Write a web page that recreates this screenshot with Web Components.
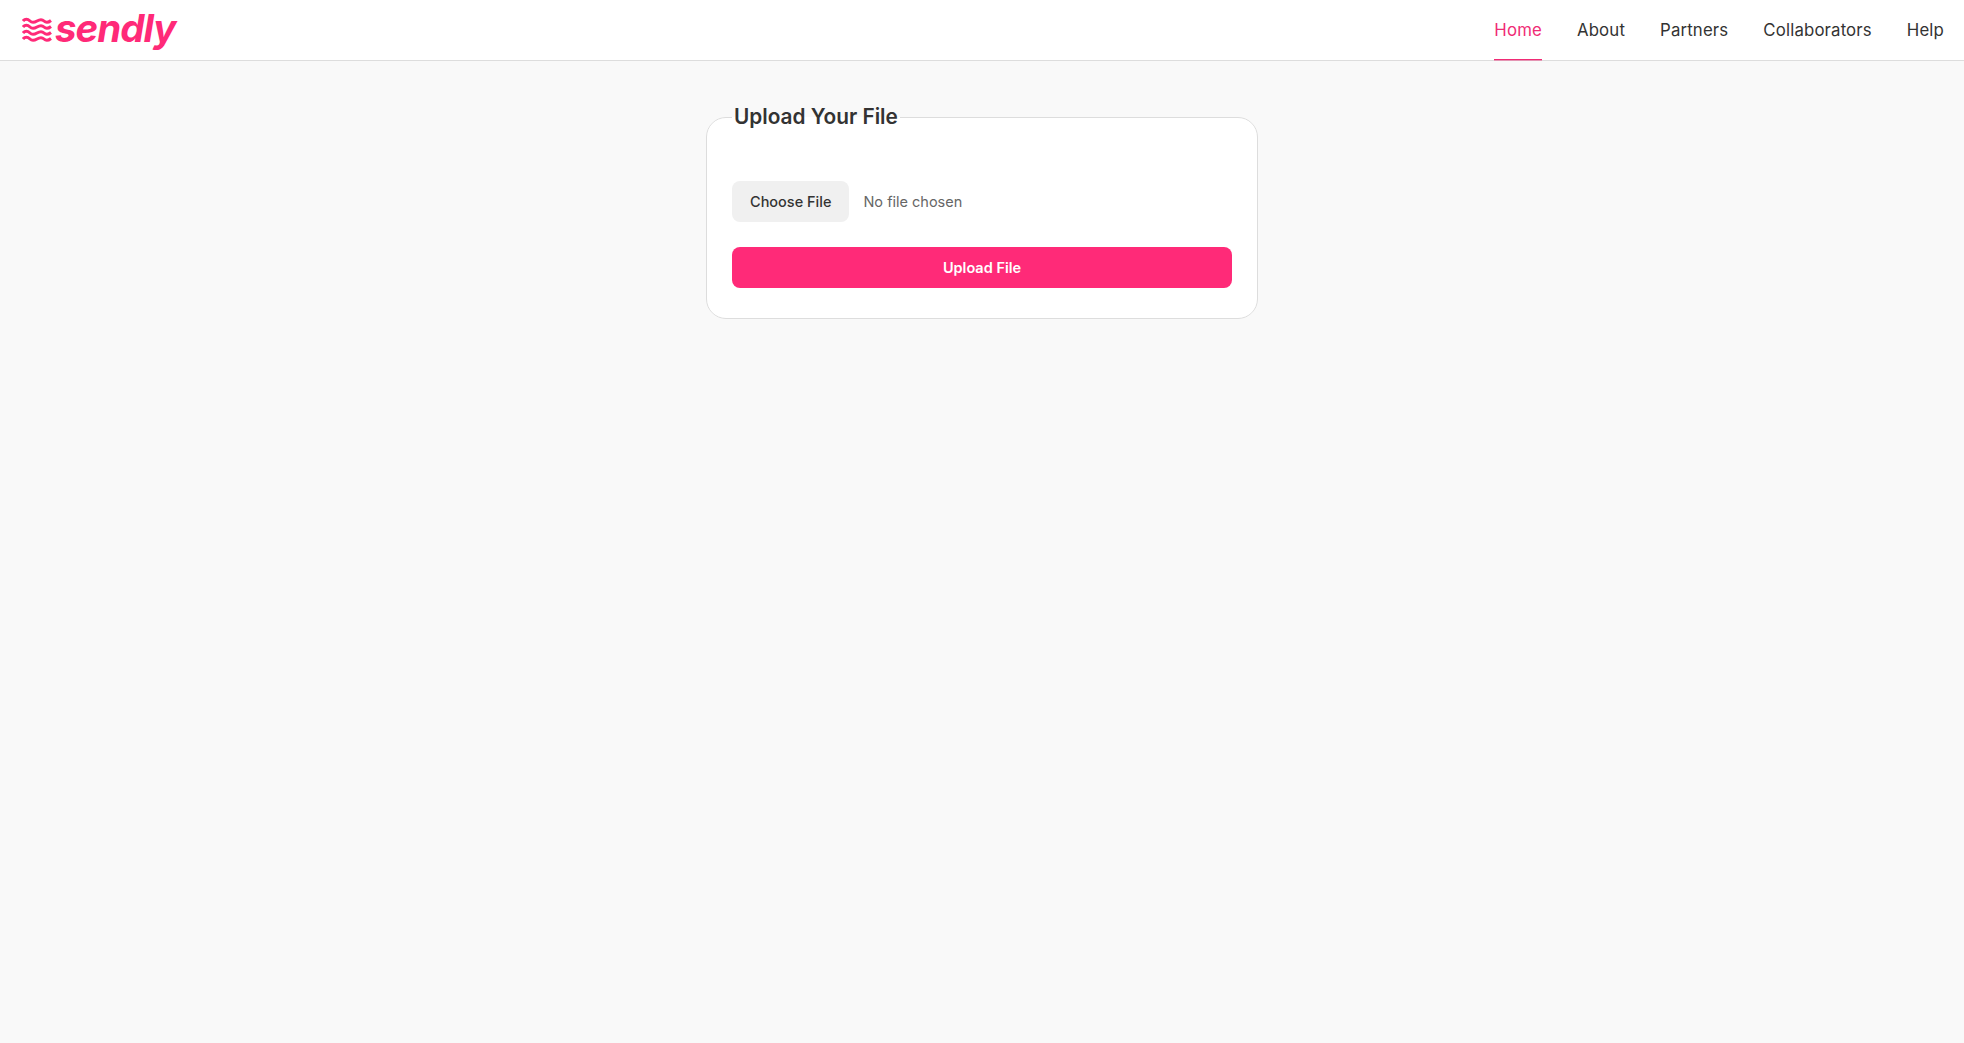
<!DOCTYPE html>
<html lang="en">
<head>
<meta charset="utf-8">
<title>Sendly</title>
<style>
  html, body { margin: 0; height: 100%; }
  body { background: #f9f9f9; font-family: "Inter", "Liberation Sans", sans-serif; color: #333; }
</style>
</head>
<body>
<site-header>
  <nav-link active>Home</nav-link>
  <nav-link>About</nav-link>
  <nav-link>Partners</nav-link>
  <nav-link>Collaborators</nav-link>
  <nav-link>Help</nav-link>
</site-header>
<upload-card heading="Upload Your File"></upload-card>

<script>
class SiteLogo extends HTMLElement {
  constructor() {
    super();
    this.attachShadow({ mode: 'open' });
  }
  connectedCallback() {
    const wave = y => `<path d="M1 ${y} C3 ${y - 2.5} 5.5 ${y - 2.5} 8 ${y} S12.5 ${y + 1.5} 15 ${y} S19.5 ${y - 2.5} 22 ${y} S26.5 ${y + 1.5} 29 ${y - 0.5}" />`;
    this.shadowRoot.innerHTML = `
      <style>
        :host { display: flex; align-items: center; gap: 3px; }
        svg { width: 30px; height: 26px; display: block; }
        path { fill: none; stroke: #ff2a78; stroke-width: 3; }
        span {
          font: italic 700 38.5px/1 "Inter", "Liberation Sans", sans-serif;
          color: #ff2a78;
          letter-spacing: -1px;
          position: relative;
          top: -2px;
        }
      </style>
      <svg viewBox="0 0 30 26" aria-hidden="true">${[4, 10, 16, 22].map(wave).join('')}</svg>
      <span>sendly</span>
    `;
  }
}
customElements.define('site-logo', SiteLogo);

class NavLink extends HTMLElement {
  constructor() {
    super();
    this.attachShadow({ mode: 'open' });
    this.shadowRoot.innerHTML = `
      <style>
        :host {
          display: flex;
          align-items: center;
          height: 60px;
          box-sizing: border-box;
          font-size: 16.8px;
          letter-spacing: .15px;
          color: #333;
          border-bottom: 1px solid transparent;
          cursor: pointer;
        }
        :host([active]) {
          color: #f02b75;
          border-bottom-color: #f02b75;
          box-shadow: 0 1px 0 rgba(240, 43, 117, .4);
        }
      </style>
      <slot></slot>
    `;
  }
}
customElements.define('nav-link', NavLink);

class SiteHeader extends HTMLElement {
  constructor() {
    super();
    this.attachShadow({ mode: 'open' });
    this.shadowRoot.innerHTML = `
      <style>
        :host {
          display: flex;
          justify-content: space-between;
          align-items: center;
          height: 61px;
          box-sizing: border-box;
          padding: 0 20px 0 22px;
          background: #fff;
          border-bottom: 1px solid #ddd;
        }
        nav { display: flex; gap: 35px; }
      </style>
      <site-logo></site-logo>
      <nav><slot></slot></nav>
    `;
  }
}
customElements.define('site-header', SiteHeader);

class UploadCard extends HTMLElement {
  constructor() {
    super();
    this.attachShadow({ mode: 'open' });
  }
  connectedCallback() {
    this.shadowRoot.innerHTML = `
      <style>
        :host { display: block; width: 552px; margin: 40px auto 0; }
        fieldset {
          margin: 0;
          padding: 24px 25px 30px;
          background: #fff;
          border: 1px solid #ddd;
          border-radius: 20px;
          display: flex;
          flex-direction: column;
        }
        legend {
          margin-left: 0;
          padding: 0 2px;
          font-size: 20.8px;
          font-weight: 600;
          line-height: 32px;
          color: #333;
        }
        .picker { display: flex; align-items: center; gap: 14px; margin-top: 24px; }
        .choose {
          height: 41px;
          padding: 0 18px 1px;
          border: none;
          border-radius: 8px;
          background: #f0f0f0;
          color: #333;
          font: 500 14.5px "Inter", "Liberation Sans", sans-serif;
        }
        .none { font-size: 14.5px; color: #666; padding-bottom: 1px; }
        .upload {
          height: 41px;
          margin-top: 25px;
          padding: 0 0 1px;
          border: none;
          border-radius: 8px;
          background: #ff2a78;
          color: #fff;
          font: 600 14.5px "Inter", "Liberation Sans", sans-serif;
        }
      </style>
      <fieldset>
        <legend>${this.getAttribute('heading')}</legend>
        <div class="picker">
          <button class="choose" type="button">Choose File</button>
          <span class="none">No file chosen</span>
        </div>
        <button class="upload" type="button">Upload File</button>
      </fieldset>
    `;
  }
}
customElements.define('upload-card', UploadCard);
</script>
</body>
</html>
